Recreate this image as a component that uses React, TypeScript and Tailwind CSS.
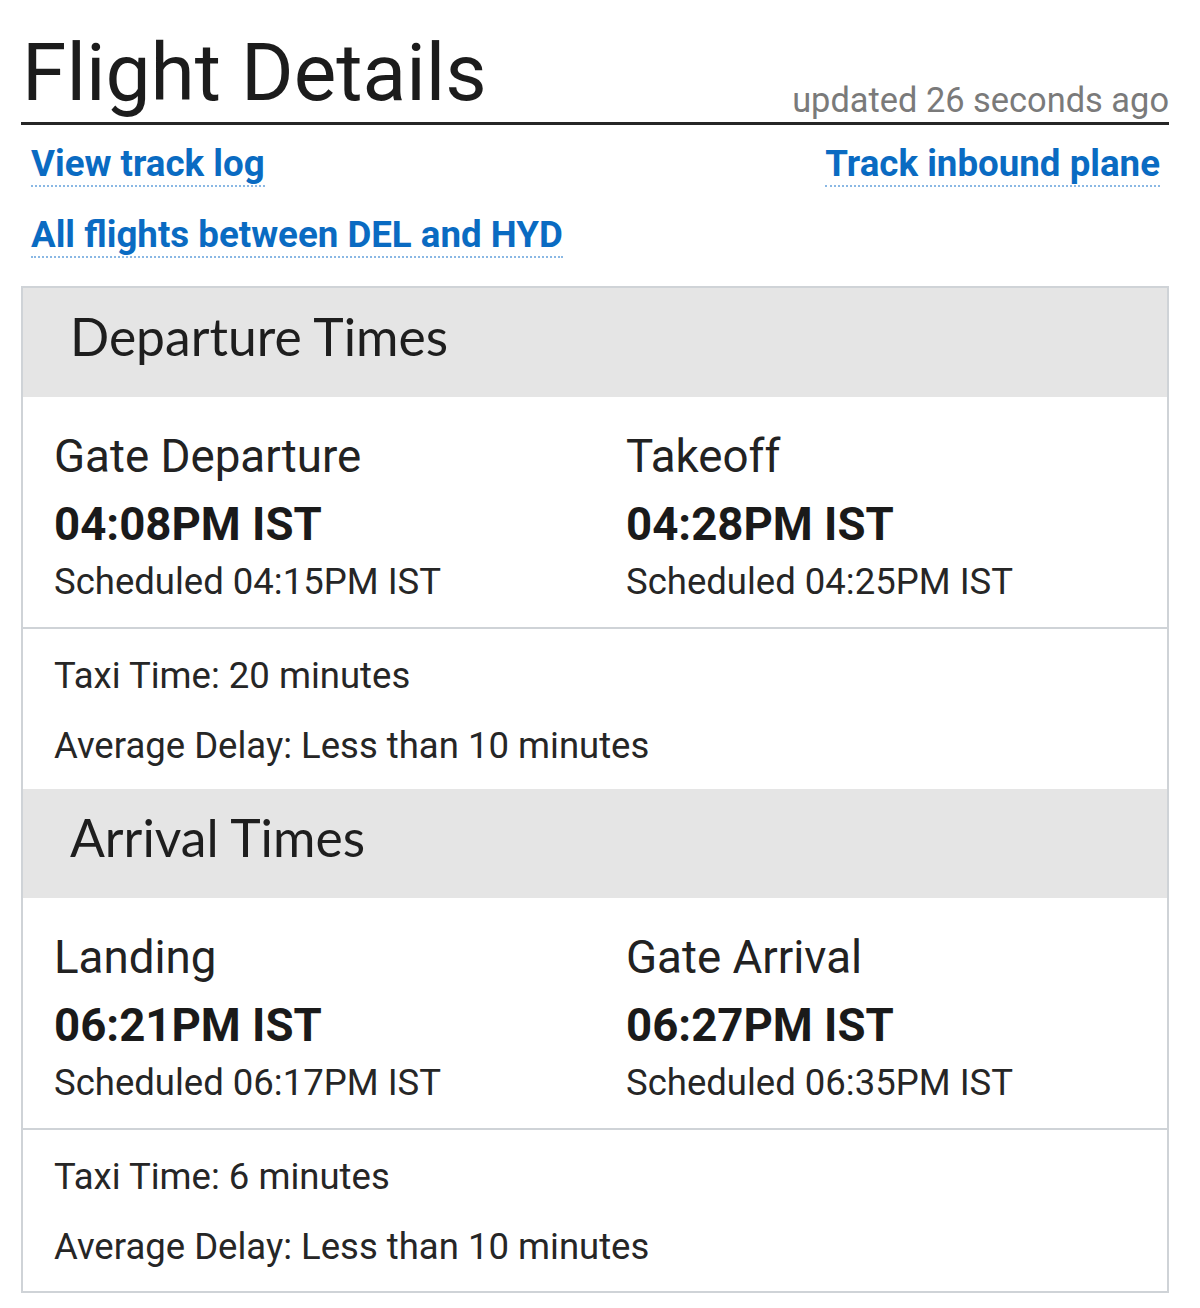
const roboto = { fontFamily: 'Roboto, "Liberation Sans", sans-serif' };

type Stop = { label: string; actual: string; scheduled: string };

interface SectionProps {
  title: string;
  stops: [Stop, Stop];
  taxi: string;
  delay: string;
}

function TimeCell({ stop }: { stop: Stop }) {
  return (
    <div className="pl-[31px]">
      <div className="text-[45.7px] leading-[1.172] text-[#222]">{stop.label}</div>
      <div className="mt-[14px] text-[45.6px] leading-[1.172] font-bold text-[#1a1a1a]">{stop.actual}</div>
      <div className="mt-[10px] text-[36.5px] leading-[1.172] text-[#262626]">
        Scheduled {stop.scheduled}
      </div>
    </div>
  );
}

function TimesSection({ title, stops, taxi, delay }: SectionProps) {
  return (
    <section>
      <div className="h-[109px] bg-[#e5e5e5] pl-[47px] pt-[18px]">
        <h2
          className="text-[51.6px] leading-[1.2] text-[#1e1e1e]"
          style={{ fontFamily: 'Lato, "Open Sans", sans-serif' }}
        >
          {title}
        </h2>
      </div>
      <div className="grid grid-cols-2 pt-[33px] pb-[23px] border-b-2 border-[#cfd3d7]">
        <TimeCell stop={stops[0]} />
        <TimeCell stop={stops[1]} />
      </div>
      <div className="pl-[31px] pt-[26px] pb-[22px] text-[36.5px] leading-[1.172] text-[#262626]">
        <div>Taxi Time: {taxi}</div>
        <div className="mt-[27px]">Average Delay: {delay}</div>
      </div>
    </section>
  );
}

export default function App() {
  return (
    <div className="min-h-[1308px] w-[1200px] bg-white" style={roboto}>
      <div className="ml-[21px] w-[1148px] pt-[26px]">
        {/* title bar */}
        <div className="flex items-end justify-between border-b-[3px] border-[#262626] pb-[2px]">
          <h1 className="text-[80.3px] leading-[1.172] text-[#1c1c1c] pl-[1px]">Flight Details</h1>
          <span className="text-[34.4px] leading-[1.172] text-[#7a7a7a]">updated 26 seconds ago</span>
        </div>

        {/* links */}
        <div className="flex justify-between pl-[10px] pr-[9px] mt-[17px]">
          <a className="text-[36.7px] leading-[1.172] font-bold text-[#0a6bc2] border-b-2 border-dotted border-[#8ab8e4]">
            View track log
          </a>
          <a className="text-[36.7px] leading-[1.172] font-bold text-[#0a6bc2] border-b-2 border-dotted border-[#8ab8e4]">
            Track inbound plane
          </a>
        </div>
        <div className="pl-[10px] mt-[26px]">
          <a className="inline-block text-[36.7px] leading-[1.172] font-bold text-[#0a6bc2] border-b-2 border-dotted border-[#8ab8e4]">
            All flights between DEL and HYD
          </a>
        </div>

        {/* times box */}
        <div className="mt-[28px] border-2 border-[#cfd3d7]">
          <TimesSection
            title="Departure Times"
            stops={[
              { label: 'Gate Departure', actual: '04:08PM IST', scheduled: '04:15PM IST' },
              { label: 'Takeoff', actual: '04:28PM IST', scheduled: '04:25PM IST' },
            ]}
            taxi="20 minutes"
            delay="Less than 10 minutes"
          />
          <TimesSection
            title="Arrival Times"
            stops={[
              { label: 'Landing', actual: '06:21PM IST', scheduled: '06:17PM IST' },
              { label: 'Gate Arrival', actual: '06:27PM IST', scheduled: '06:35PM IST' },
            ]}
            taxi="6 minutes"
            delay="Less than 10 minutes"
          />
        </div>
      </div>
    </div>
  );
}
